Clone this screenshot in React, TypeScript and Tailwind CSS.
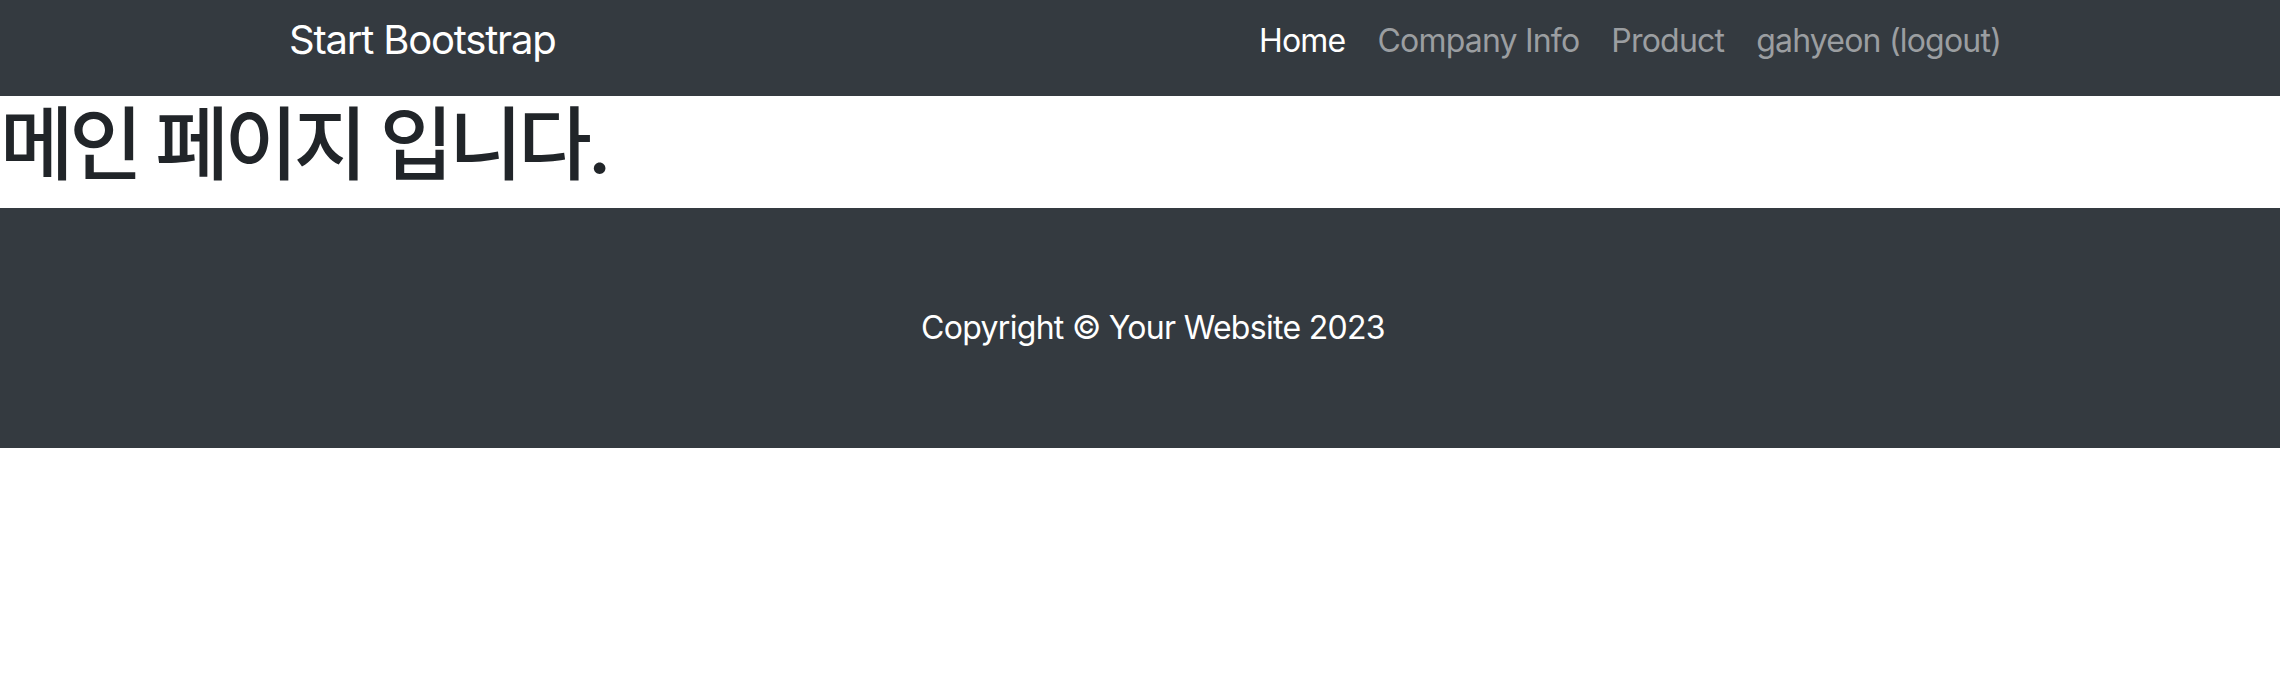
const navItems = [
  { label: "Home", active: true },
  { label: "Company Info", active: false },
  { label: "Product", active: false },
  { label: "gahyeon (logout)", active: false },
];

export default function App() {
  return (
    <div className="min-h-[700px] bg-white font-['Inter','Noto_Sans_CJK_KR',sans-serif]">
      {/* navbar */}
      <nav className="h-[96px] bg-[#343a40]">
        <div className="ml-[193px] flex w-[1920px] items-start px-[96px]">
          <a href="#" className="pt-[10px] text-[40px] leading-[60px] tracking-[-1.2px] text-white">
            Start Bootstrap
          </a>
          <ul className="ml-auto flex pt-[17px]">
            {navItems.map((item) => (
              <li key={item.label}>
                <a
                  href="#"
                  className={
                    item.active
                      ? "block px-4 text-[32px] leading-[48px] tracking-[-0.8px] text-white"
                      : "block px-4 text-[32px] leading-[48px] tracking-[-0.8px] text-[#9b9ea1]"
                  }
                >
                  {item.label}
                </a>
              </li>
            ))}
          </ul>
        </div>
      </nav>

      <h1 className="mb-4 text-[80px] font-medium leading-[96px] tracking-[-4.4px] text-[#212529]">
        메인 페이지 입니다.
      </h1>

      {/* footer */}
      <footer className="bg-[#343a40] py-[96px]">
        <div className="ml-[193px] w-[1920px] px-[96px]">
          <p className="text-center text-[32px] leading-[48px] tracking-[-0.7px] text-white">
            Copyright &copy; Your Website 2023
          </p>
        </div>
      </footer>
    </div>
  );
}
